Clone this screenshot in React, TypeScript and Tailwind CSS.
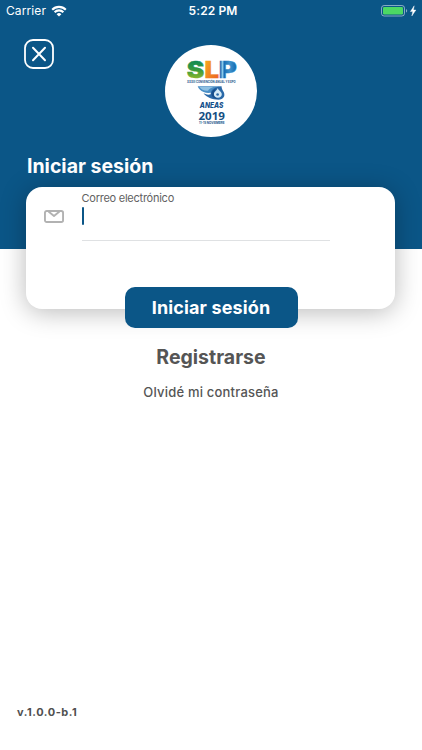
import { useState } from "react";

function StatusBar() {
  return (
    <div className="flex h-[22px] items-center text-white">
      <div className="flex flex-1 items-center gap-[5px] pl-[6px]">
        <span className="text-[12px] leading-[22px] tracking-[0.1px]">Carrier</span>
        <svg width="16" height="12" viewBox="0 0 16 12" fill="none" stroke="#fff" strokeWidth="2.1">
          <path d="M1.2 4.7a9.6 9.6 0 0 1 13.6 0" />
          <path d="M3.6 7.2a6.2 6.2 0 0 1 8.8 0" />
          <path d="M5.6 9.2a3.4 3.4 0 0 1 4.8 0L8 11.6z" fill="#fff" stroke="none" />
        </svg>
      </div>
      <span className="pl-[3px] text-[12px] font-semibold leading-[22px] tracking-[0.1px]">5:22 PM</span>
      <div className="flex flex-1 items-center justify-end pr-[5px]">
        <svg width="36" height="12" viewBox="0 0 36 12">
          <rect x="0.5" y="0.5" width="23" height="10.5" rx="2.6" fill="none" stroke="#fff" strokeOpacity="0.5" />
          <rect x="2" y="2" width="20" height="7.5" rx="1.2" fill="#4cd964" />
          <path d="M25 4c1.6.4 1.6 3.2 0 3.6z" fill="#fff" fillOpacity="0.5" />
          <path d="M33.2.8 29.4 6.6h2.4l-1 4.4 4.1-6h-2.5z" fill="#fff" stroke="#fff" strokeWidth="0.4" />
        </svg>
      </div>
    </div>
  );
}

function Logo() {
  return (
    <svg className="size-[92px]" viewBox="0 0 92 92" fontFamily="Inter, sans-serif">
      <defs>
        <linearGradient id="s" x1="0" y1="0" x2="0" y2="1">
          <stop offset="0.2" stopColor="#118b54" />
          <stop offset="0.55" stopColor="#3c9c3c" />
          <stop offset="0.85" stopColor="#8cb62e" />
        </linearGradient>
        <linearGradient id="l" x1="0" y1="0" x2="1" y2="1">
          <stop offset="0.2" stopColor="#f5a01e" />
          <stop offset="0.8" stopColor="#ed6a23" />
        </linearGradient>
        <linearGradient id="p" x1="0" y1="0" x2="1" y2="0">
          <stop offset="0.1" stopColor="#1a6fb4" />
          <stop offset="0.2" stopColor="#8ccbec" />
          <stop offset="0.3" stopColor="#1a6fb4" />
          <stop offset="0.6" stopColor="#3d93cd" />
          <stop offset="0.9" stopColor="#1a6fb4" />
        </linearGradient>
      </defs>
      <circle cx="46" cy="46" r="46" fill="#fff" />
      <g fontSize="22.500" fontWeight="900" strokeWidth="0.4">
        <text x="21.8" y="32.7" textLength="17.500" lengthAdjust="spacingAndGlyphs" fill="url(#s)" stroke="url(#s)">S</text>
        <text x="39.500" y="32.7" textLength="14.500" lengthAdjust="spacingAndGlyphs" fill="url(#l)" stroke="url(#l)">L</text>
        <text x="53.800" y="32.7" textLength="18" lengthAdjust="spacingAndGlyphs" fill="url(#p)" stroke="url(#p)">P</text>
      </g>
      <text x="22" y="37.8" fontSize="3.600" fontWeight="700" fill="#24568a" textLength="48.500" lengthAdjust="spacingAndGlyphs">
        XXXIII CONVENCIÓN ANUAL Y EXPO
      </text>
      {/* wave and drop */}
      <path d="M32.700 41.300H57c-5.500.7-9 3-9.600 6-2.400.8-6 .9-8.800-.3-3-1.200-5.200-3.300-5.900-5.700z" fill="#4b8fc6" />
      <path d="M34.500 42h14c-2.600.8-4.500 2-5.500 3.700-3.600.4-7-1-8.500-3.700z" fill="#8fc0e2" />
      <path d="M56.500 41.300c.2 2.700 1.200 3.700 2.200 5.800 1.900 4-.3 7.600-5.200 7.600-6 0-12-2.200-15-6.400 3 1.600 5.300 1.600 7.200.9-.3-4.300 4.400-7.500 10.800-7.900z" fill="#2a69a8" />
      <path d="M51.500 43.200c-3.700 1.300-5.800 4.200-4.700 7.200.8 2.100 3.400 3.500 6.500 3.400-2.900-.9-4.300-2.600-4.100-5 .2-2.200 1-3.900 2.300-5.600z" fill="#174f8c" />
      <path d="M52.800 43c.3 2.500 4 3.500 4 6.200 0 2.200-1.700 3.500-3.900 3.500s-4-1.400-4-3.500c0-2.500 3-3.500 3.900-6.200z" fill="#d5eaf6" />
      <circle cx="52.600" cy="49.500" r="1.300" fill="#2a69a8" />
      <text x="34.800" y="62.500" fontSize="7.800" fontStyle="italic" fontWeight="800" fill="#14508b" textLength="23.500" lengthAdjust="spacingAndGlyphs">
        ANEAS
      </text>
      <text x="33.500" y="75.300" fontFamily="'Open Sans', sans-serif" fontSize="11.300" fontWeight="700" fill="#164f83" textLength="26.500" lengthAdjust="spacingAndGlyphs">
        2019
      </text>
      <text x="34" y="79.300" fontSize="3.500" fontWeight="700" fill="#24568a" textLength="25.500" lengthAdjust="spacingAndGlyphs">
        11-15 NOVIEMBRE
      </text>
    </svg>
  );
}

export default function App() {
  const [email, setEmail] = useState("");

  return (
    <div className="flex h-[750px] w-full flex-col overflow-hidden bg-white font-['Inter',sans-serif]">
      <header className="h-[249px] shrink-0 bg-[#0b5687]">
        <StatusBar />
        <div className="grid grid-cols-[1fr_92px_1fr] pt-[23px]">
          <button aria-label="Cerrar" className="-mt-[6px] ml-6 size-[30px]">
            <svg width="30" height="30" viewBox="0 0 30 30" fill="none" stroke="#fff" strokeLinecap="round">
              <rect x="1" y="1" width="28" height="28" rx="8" strokeWidth="1.800" />
              <path d="m9 8.800 12 12.400M21 8.800 9 21.200" strokeWidth="2" />
            </svg>
          </button>
          <Logo />
        </div>
        <h1 className="mt-[15px] pl-[27px] text-[19.500px] font-bold leading-[28px] text-white">Iniciar sesión</h1>
      </header>

      <main className="-mt-[62px] flex flex-col items-center">
        <section className="mr-px flex h-[122px] w-[369px] shrink-0 rounded-[16px] bg-white pl-[17.500px] shadow-[0_3px_26px_rgba(0,0,0,0.28)]">
          <svg className="mt-[23px] shrink-0" width="20" height="13" viewBox="0 0 20 13" fill="none" stroke="#b2b2b2" strokeWidth="1.900" strokeLinejoin="round">
            <rect x="0.950" y="0.950" width="18.100" height="11.100" rx="1.800" />
            <path d="m4.500 1.500 5.500 4.500 5.500-4.500" />
          </svg>
          <label className="ml-[18px] flex h-[54px] w-[248px] flex-col border-b border-[#dfe1e3] pt-[3px]">
            <span className="text-[11px] leading-[16px] tracking-[-0.250px] text-[#626262]">Correo electrónico</span>
            <span className="mt-[1px] flex h-[18px] items-center">
              {email === "" && <span className="h-[18px] w-[2px] shrink-0 rounded-full bg-[#0b5687]" />}
              <input
                type="email"
                value={email}
                onChange={(e) => setEmail(e.target.value)}
                className="w-full min-w-0 bg-transparent text-sm outline-none"
              />
            </span>
          </label>
        </section>

        <button className="relative -mt-[22px] h-[41px] w-[173px] rounded-[10px] bg-[#0b5687] text-[18px] font-bold tracking-[0.130px] text-white">
          Iniciar sesión
        </button>
        <button className="mt-[16px] text-[19.500px] font-bold leading-[26px] text-[#555]">Registrarse</button>
        <button className="mt-[12px] text-[13px] font-medium leading-[20px] tracking-[0.200px] text-[#555]">
          Olvidé mi contraseña
        </button>
      </main>

      <footer className="mt-auto pb-[30px] pl-[17px] text-[11px] font-bold leading-[16px] tracking-[0.550px] text-[#505050]">
        v.1.0.0-b.1
      </footer>
    </div>
  );
}
